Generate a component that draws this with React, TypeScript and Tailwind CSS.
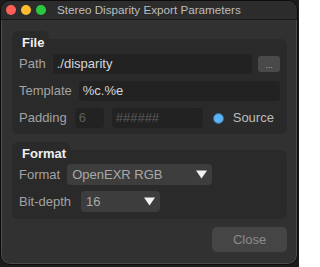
const font = "font-['Liberation_Sans',Arial,sans-serif]"

function Arrow() {
  return (
    <svg width="11" height="9" viewBox="0 0 11 9" className="shrink-0">
      <polygon points="0,0.5 11,0.5 5.5,8.5" fill="#f2f2f2" />
    </svg>
  )
}

function Select({ value, width }: { value: string; width: string }) {
  return (
    <div
      className={`${width} h-[21px] flex items-center justify-between pl-[5px] pr-[5px] rounded-[4px] bg-[#3d3d3d] text-[13px] text-[#a9a9a9]`}
    >
      <span>{value}</span>
      <Arrow />
    </div>
  )
}

function Group({ title, tabWidth, children, pt }: { title: string; tabWidth: string; children: React.ReactNode; pt: string }) {
  return (
    <div className="flex flex-col">
      <div
        className={`relative z-10 ${tabWidth} h-[18px] pl-[10px] pt-[4px] rounded-t-[6px] bg-[#2a2a2a] text-[13px] font-bold text-[#f0f0f0] leading-[15px]`}
      >
        {title}
      </div>
      <div className={`-mt-[10px] ${pt} pb-[6px] pl-[7px] pr-[7px] rounded-[6px] rounded-tl-none bg-[#2a2a2a] flex flex-col`}>
        {children}
      </div>
    </div>
  )
}

export default function App() {
  return (
    <div className={`w-[299px] h-[267px] bg-[#1c1c1c] ${font}`}>
      <div className="w-[298px] h-[265px] rounded-[10px] border border-[#0c0c0c] bg-[#313131] shadow-[inset_0_0_0_1px_rgba(255,255,255,0.13)] overflow-hidden flex flex-col">
        {/* title bar */}
        <div className="h-[19px] shrink-0 flex items-center pl-[5px] border-b border-[#1a1a1a] bg-[#2c2c2c]">
          <div className="flex gap-[5px]">
            <span className="w-[10px] h-[10px] rounded-full bg-[#fe5f57]" />
            <span className="w-[10px] h-[10px] rounded-full bg-[#febc2e]" />
            <span className="w-[10px] h-[10px] rounded-full bg-[#2ac840]" />
          </div>
          <span className="ml-[11px] text-[11.7px] text-[#bdbdbd] leading-none">Stereo Disparity Export Parameters</span>
        </div>

        <div className="flex flex-col pt-[11px] pl-[11px] pr-[10px]">
          <Group title="File" tabWidth="w-[37px]" pt="pt-[15px]">
            <div className="flex flex-col gap-[7px]">
              <div className="h-[20px] flex items-center gap-[7px]">
                <span className="text-[13px] text-[#a3a3a3]">Path</span>
                <div className="flex-1 h-[20px] flex items-center pl-[4px] rounded-[4px] bg-[#222222] text-[13px] text-[#d6d6d6]">
                  ./disparity
                </div>
                <div className="w-[22px] h-[16px] ml-[-1px] flex items-center justify-center rounded-[3px] bg-[#4a4a4a] text-[9px] text-[#a8a8a8] leading-none pt-[3px]">
                  ...
                </div>
              </div>
              <div className="h-[20px] flex items-center gap-[7px]">
                <span className="text-[13px] text-[#a3a3a3]">Template</span>
                <div className="flex-1 h-[20px] flex items-center pl-[4px] rounded-[4px] bg-[#222222] text-[13px] text-[#d6d6d6]">
                  %c.%e
                </div>
              </div>
              <div className="h-[20px] flex items-center">
                <span className="text-[13px] text-[#a3a3a3]">Padding</span>
                <div className="ml-[8px] w-[29px] h-[20px] flex items-center pl-[4px] rounded-[4px] bg-[#222222] text-[13px] text-[#5c5c5c]">
                  6
                </div>
                <div className="ml-[8px] w-[91px] h-[20px] flex items-center pl-[4px] rounded-[4px] bg-[#222222] text-[13px] text-[#5c5c5c]">
                  ######
                </div>
                <span className="ml-[10px] w-[11px] h-[11px] rounded-full bg-[#5ab2f7] border border-[#3b6a90]" />
                <span className="ml-[9px] text-[13px] text-[#bcbcbc]">Source</span>
              </div>
            </div>
          </Group>

          <div className="mt-[8px]">
            <Group title="Format" tabWidth="w-[58px]" pt="pt-[14px]">
              <div className="flex flex-col gap-[6px] pb-[1px]">
                <div className="flex items-center gap-[7px]">
                  <span className="text-[13px] text-[#a3a3a3]">Format</span>
                  <Select value="OpenEXR RGB" width="w-[145px]" />
                </div>
                <div className="flex items-center gap-[7px]">
                  <span className="text-[13px] text-[#a3a3a3]">Bit-depth</span>
                  <div className="ml-[3px]">
                    <Select value="16" width="w-[79px]" />
                  </div>
                </div>
              </div>
            </Group>
          </div>

          <div className="mt-[8px] flex justify-end">
            <div className="w-[75px] h-[25px] flex items-center justify-center rounded-[5px] bg-[#454545] text-[13px] text-[#8c8c8c]">
              Close
            </div>
          </div>
        </div>
      </div>
    </div>
  )
}
